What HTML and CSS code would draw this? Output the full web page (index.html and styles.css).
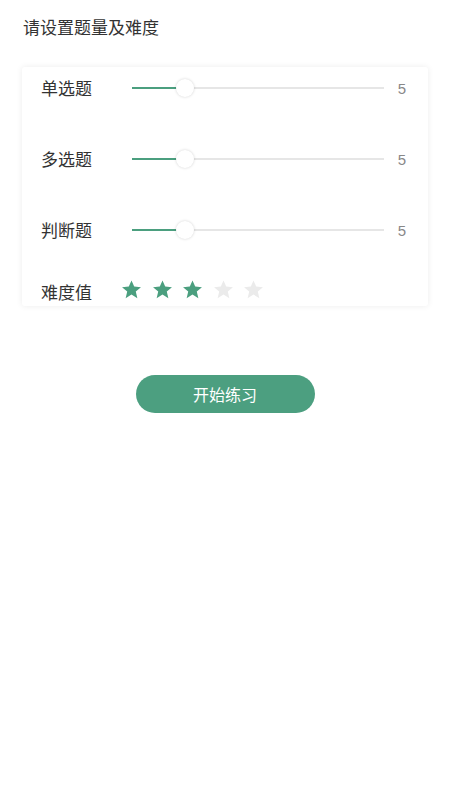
FILE: index.html
```html
<!DOCTYPE html>
<html lang="zh">
<head>
<meta charset="utf-8">
<link rel="stylesheet" href="styles.css">
</head>
<body>
<div class="page">
  <h1 class="title">请设置题量及难度</h1>
  <div class="card">
    <div class="row">
      <span class="label">单选题</span>
      <div class="slider">
        <div class="track"><div class="fill" style="width:52px"></div><div class="thumb" style="left:44px"></div></div>
      </div>
      <span class="value">5</span>
    </div>
    <div class="row">
      <span class="label">多选题</span>
      <div class="slider">
        <div class="track"><div class="fill" style="width:52px"></div><div class="thumb" style="left:44px"></div></div>
      </div>
      <span class="value">5</span>
    </div>
    <div class="row">
      <span class="label">判断题</span>
      <div class="slider">
        <div class="track"><div class="fill" style="width:52px"></div><div class="thumb" style="left:44px"></div></div>
      </div>
      <span class="value">5</span>
    </div>
    <div class="row row-diff">
      <span class="label label-diff">难度值</span>
      <div class="stars">
        <svg class="star on" viewBox="0 0 24 24"><path d="M12 1.6l3.1 7.1 7.7.6-5.9 5 1.8 7.6L12 17.8l-6.7 4.1 1.8-7.6-5.9-5 7.7-.6z"/></svg>
        <svg class="star on" viewBox="0 0 24 24"><path d="M12 1.6l3.1 7.1 7.7.6-5.9 5 1.8 7.6L12 17.8l-6.7 4.1 1.8-7.6-5.9-5 7.7-.6z"/></svg>
        <svg class="star on" viewBox="0 0 24 24"><path d="M12 1.6l3.1 7.1 7.7.6-5.9 5 1.8 7.6L12 17.8l-6.7 4.1 1.8-7.6-5.9-5 7.7-.6z"/></svg>
        <svg class="star" viewBox="0 0 24 24"><path d="M12 1.6l3.1 7.1 7.7.6-5.9 5 1.8 7.6L12 17.8l-6.7 4.1 1.8-7.6-5.9-5 7.7-.6z"/></svg>
        <svg class="star" viewBox="0 0 24 24"><path d="M12 1.6l3.1 7.1 7.7.6-5.9 5 1.8 7.6L12 17.8l-6.7 4.1 1.8-7.6-5.9-5 7.7-.6z"/></svg>
      </div>
    </div>
  </div>
  <div class="actions">
    <button class="start">开始练习</button>
  </div>
</div>
</body>
</html>
```
FILE: styles.css
```css
* { box-sizing: border-box; }
html, body { margin: 0; padding: 0; background: #fff; }
body {
  font-family: "Noto Sans CJK SC", "Noto Sans", sans-serif;
  color: #333;
}
.page { padding: 0 22px; }
.title {
  margin: 0;
  padding-top: 15px;
  height: 67px;
  font-size: 17px;
  font-weight: 400;
  line-height: 24px;
  color: #333;
  padding-left: 1px;
}
.card {
  background: #fff;
  border-radius: 3px;
  box-shadow: 0 0 6px rgba(0,0,0,0.08);
  padding: 0 21px 0 19px;
  height: 239px;
  overflow: hidden;
}
.row {
  display: flex;
  align-items: center;
  height: 42px;
  margin-bottom: 29px;
}
.label {
  width: 91px;
  font-size: 17px;
  line-height: 24px;
  color: #333;
  flex-shrink: 0;
}
.slider {
  flex: 1;
  display: flex;
  align-items: center;
  height: 20px;
}
.track {
  position: relative;
  width: 252px;
  height: 2px;
  background: #e6e6e6;
}
.fill {
  position: absolute;
  left: 0; top: 0;
  height: 2px;
  background: #4b9f7f;
}
.thumb {
  position: absolute;
  top: -8px;
  width: 18px;
  height: 18px;
  border-radius: 50%;
  background: #fff;
  box-shadow: 0 0 3px rgba(0,0,0,0.18);
}
.value {
  width: 22px;
  text-align: right;
  font-family: "Liberation Sans", Arial, sans-serif;
  font-size: 15px;
  color: #888;
  flex-shrink: 0;
  padding-right: 1px;
}
.row-diff {
  height: 26px;
  margin-bottom: 0;
  align-items: flex-end;
}
.label-diff { width: 80px; margin-bottom: 2px; }
.stars {
  display: flex;
  gap: 9.5px;
  margin-bottom: 6px;
}
.star {
  width: 21px;
  height: 21px;
  fill: #ebebeb;
}
.star.on { fill: #4b9f7f; }
.actions {
  display: flex;
  justify-content: center;
  padding-top: 69px;
}
.start {
  width: 179px;
  height: 38px;
  border: none;
  border-radius: 19px;
  background: #4c9f80;
  color: #fff;
  font-family: "Noto Sans CJK SC", sans-serif;
  font-size: 16px;
  padding: 0;
}
```
